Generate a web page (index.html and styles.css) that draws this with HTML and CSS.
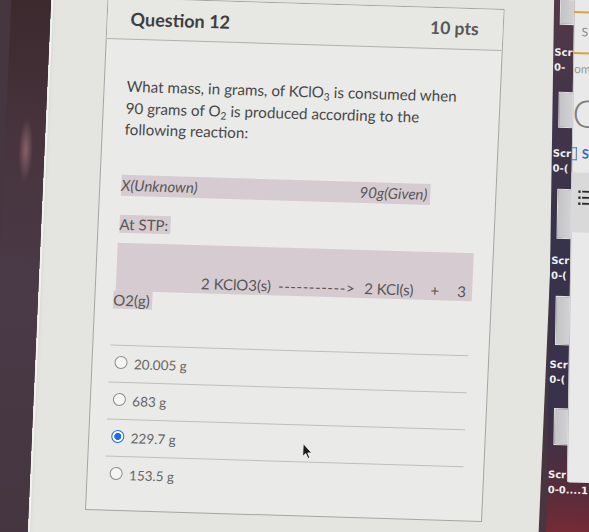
FILE: index.html
```html
<!DOCTYPE html>
<html lang="en">
<head>
<meta charset="utf-8">
<title>Question 12</title>
<link rel="stylesheet" href="styles.css">
</head>
<body>
<div class="scene">
  <div class="desk-left"></div>
  <main class="page">
    <section class="card">
      <header class="card-head">
        <h2 class="q-title">Question 12</h2>
        <span class="q-pts">10 pts</span>
      </header>
      <div class="card-body">
        <p class="q-text">What mass, in grams, of KClO<sub>3</sub> is consumed when 90 grams of O<sub>2</sub> is produced according to the following reaction:</p>
        <div class="hl hl-given"><span>X(Unknown)</span><span>90g(Given)</span></div>
        <div class="hl hl-stp">At STP:</div>
        <div class="hl hl-eq">
          <span class="eq-a">2 KClO3(s)</span>
          <span class="eq-arrow">-----------&gt;</span>
          <span class="eq-b">2 KCl(s)</span>
          <span class="eq-plus">+</span>
          <span class="eq-three">3</span>
        </div>
        <div class="hl hl-o2">O2(g)</div>
        <ul class="answers">
          <li class="answer"><span class="radio"></span><span>20.005 g</span></li>
          <li class="answer"><span class="radio"></span><span>683 g</span></li>
          <li class="answer"><span class="radio radio-on"></span><span>229.7 g</span></li>
          <li class="answer"><span class="radio"></span><span>153.5 g</span></li>
        </ul>
      </div>
    </section>
    <svg class="cursor" width="11" height="17" viewBox="0 0 11 17" aria-hidden="true">
      <path d="M1 1 L1 14 L4 11 L6.3 15.8 L8.2 15 L6 10.3 L10 10.3 Z" fill="#1e1e1e" stroke="#f4f4f4" stroke-width="0.9" stroke-linejoin="round"/>
    </svg>
  </main>
  <aside class="dock">
    <div class="desk">
      <div class="thumb t1"></div>
      <div class="lbl l1">Scr<br>0-</div>
      <div class="thumb t2"></div>
      <div class="lbl l2">Scr<br>0-(</div>
      <div class="thumb t3"></div>
      <div class="lbl l3">Scr<br>0-(</div>
      <div class="thumb t4"></div>
      <div class="lbl l4">Scr<br>0-(</div>
      <div class="thumb t5"></div>
      <div class="lbl l5">Scr<br>0-0....1</div>
    </div>
    <div class="win">
      <div class="gold g1"></div>
      <div class="w-s">S</div>
      <div class="gold g2"></div>
      <div class="w-om">om</div>
      <div class="w-c">C</div>
      <div class="w-blue"><span class="w-box"></span><span class="w-bs">S</span></div>
      <div class="w-panel">
        <svg width="13" height="17" viewBox="0 0 13 17" aria-hidden="true">
          <g fill="#2b2b2b">
            <rect x="0" y="1" width="2.4" height="2.4"/>
            <rect x="4" y="1.3" width="9" height="1.8"/>
            <rect x="0" y="7" width="2.4" height="2.4"/>
            <rect x="4" y="7.3" width="9" height="1.8"/>
            <rect x="0" y="13" width="2.4" height="2.4"/>
            <rect x="4" y="13.3" width="9" height="1.8"/>
          </g>
        </svg>
      </div>
    </div>
  </aside>
</div>
</body>
</html>
```
FILE: styles.css
```css
html, body {
  margin: 0;
  padding: 0;
}
body {
  width: 589px;
  height: 532px;
  overflow: hidden;
  background: #46363f;
  font-family: Lato, "Open Sans", "DejaVu Sans", sans-serif;
}
.scene {
  display: flex;
  width: 660px;
  height: 580px;
  margin-top: -24px;
  transform-origin: 294.5px 290px;
  transform: matrix(1, 0.03, -0.044, 1, 0, 0);
}
.desk-left {
  flex: none;
  width: 40px;
  background:
    radial-gradient(ellipse 7px 32px at 21px 182px, rgba(214, 150, 160, 0.45), rgba(214, 150, 160, 0) 100%),
    linear-gradient(180deg, #3a272b 0%, #47343d 30%, #4a3a47 55%, #45353f 100%);
}
.page {
  flex: none;
  width: 510px;
  position: relative;
  box-sizing: border-box;
  padding-top: 27px;
  background: #e4e4e1;
  box-shadow: inset 2px 0 0 #f1f1ef, inset 4px 0 3px -1px #d9d9d6;
}
.card {
  margin-left: 56px;
  width: 397px;
  height: 513px;
  box-sizing: border-box;
  border: 1px solid #a4a4a2;
  background: #eaeae8;
}
.card-head {
  height: 40px;
  border-bottom: 1px solid #b0b0ae;
  background: #e7e7e4;
  display: flex;
  align-items: center;
  justify-content: space-between;
  padding: 0 24px 0 23px;
}
.q-title {
  margin: 0;
  font-size: 18px;
  font-weight: 700;
  color: #3e3e3e;
}
.q-pts {
  font-size: 17.5px;
  font-weight: 700;
  color: #575757;
  margin-top: -2px;
}
.card-body {
  padding: 36px 0 0 21px;
}
.q-text {
  margin: 0 0 34px 1px;
  width: 340px;
  font-size: 15.2px;
  line-height: 21.5px;
  color: #484848;
}
sub {
  font-size: 0.68em;
  line-height: 0;
  vertical-align: -0.28em;
}
.hl {
  background: #d6cbd0;
  color: #575757;
  font-size: 15px;
}
.hl-given {
  display: flex;
  justify-content: space-between;
  width: 309px;
  height: 21px;
  line-height: 21px;
  box-sizing: border-box;
  padding-right: 3px;
  font-style: italic;
  margin-bottom: 19px;
}
.hl-stp {
  width: fit-content;
  height: 18px;
  line-height: 18px;
  padding-right: 2px;
  margin-bottom: 10px;
}
.hl-eq {
  display: flex;
  align-items: flex-end;
  width: 356px;
  height: 48px;
  box-sizing: border-box;
  margin-left: -1px;
  padding-left: 85px;
  line-height: 20px;
}
.eq-arrow {
  margin-left: 7px;
  letter-spacing: 0.6px;
}
.eq-b {
  margin-left: 9px;
}
.eq-plus {
  margin-left: 17px;
}
.eq-three {
  margin-left: 18px;
}
.hl-o2 {
  width: fit-content;
  height: 18px;
  line-height: 18px;
  margin-left: -3px;
  padding: 0 2px 0 0;
}
.answers {
  list-style: none;
  margin: 36px 0 0 -4px;
  padding: 0;
  width: 358px;
}
.answer {
  height: 37px;
  box-sizing: border-box;
  border-top: 1px solid #bebebb;
  display: flex;
  align-items: center;
  gap: 7px;
  padding-left: 4.5px;
  font-size: 13.5px;
  color: #666666;
}
.radio {
  flex: none;
  width: 13px;
  height: 13px;
  box-sizing: border-box;
  border-radius: 50%;
  border: 1px solid #8d8d8d;
  background: #f5f5f4;
  margin-top: -2px;
}
.radio-on {
  border: 1.5px solid #1f6cf0;
  background: radial-gradient(circle, #1f6cf0 0, #1f6cf0 3.2px, #ffffff 3.8px);
}
.cursor {
  position: absolute;
  left: 270px;
  top: 466px;
}
.dock {
  flex: none;
  width: 110px;
  display: flex;
  transform-origin: 50% 50%;
  transform: skewX(1.66deg);
  background: linear-gradient(180deg, #573846 0%, #45354a 18%, #37334b 45%, #3a3149 75%, #5a2c3a 88%, #8c2a33 100%);
}
.desk {
  flex: none;
  width: 20px;
  padding-top: 16px;
  display: flex;
  flex-direction: column;
}
.thumb {
  flex: none;
  margin-left: 6px;
  width: 17px;
  box-sizing: border-box;
  border: 1px solid #e2e2e2;
  background: linear-gradient(90deg, #c4c4c6, #d4d4d6);
}
.t1 { height: 25px; }
.t2 { height: 36px; margin-top: 17px; }
.t3 { height: 50px; margin-top: 13px; }
.t4 { height: 49px; margin-top: 13px; }
.t5 { height: 37px; margin-top: 21px; }
.lbl {
  margin-left: 1px;
  font-family: "DejaVu Sans", sans-serif;
  font-weight: 700;
  font-size: 10px;
  line-height: 15px;
  color: #f0f0f0;
  white-space: nowrap;
}
.l1 { margin-top: 20px; }
.l2 { margin-top: 18px; }
.l3 { margin-top: 14px; }
.l4 { margin-top: 12px; }
.l5 { margin-top: 22px; }
.win {
  flex: none;
  width: 90px;
  height: 498px;
  background: #e9e9e9;
  box-shadow: inset 1px 0 0 #c4c4c4;
  border-bottom-left-radius: 3px;
  font-family: Lato, "DejaVu Sans", sans-serif;
  color: #8a8a8a;
}
.gold {
  height: 2px;
  background: #d6a43e;
}
.g1 { margin-top: 27px; }
.g2 { margin-top: 13px; }
.w-s {
  margin: 12px 0 0 8px;
  font-size: 12px;
  line-height: 14px;
}
.w-om {
  margin: 8px 0 0 1px;
  font-size: 12px;
  line-height: 14px;
  color: #9a9a9a;
}
.w-c {
  margin: 16px 0 0 0;
  font-size: 38px;
  line-height: 40px;
  font-weight: 300;
  color: #7e7e7e;
}
.w-blue {
  display: flex;
  align-items: center;
  gap: 5px;
  margin-top: 14px;
  height: 14px;
}
.w-box {
  width: 4px;
  height: 11px;
  border: 1.5px solid #3a7bd0;
  border-left: none;
}
.w-bs {
  font-size: 13px;
  font-weight: 700;
  color: #2e6fc4;
}
.w-panel {
  margin-top: 12px;
  height: 60px;
  box-sizing: border-box;
  padding: 17px 0 0 7px;
  background: #d9d9d9;
}
```
